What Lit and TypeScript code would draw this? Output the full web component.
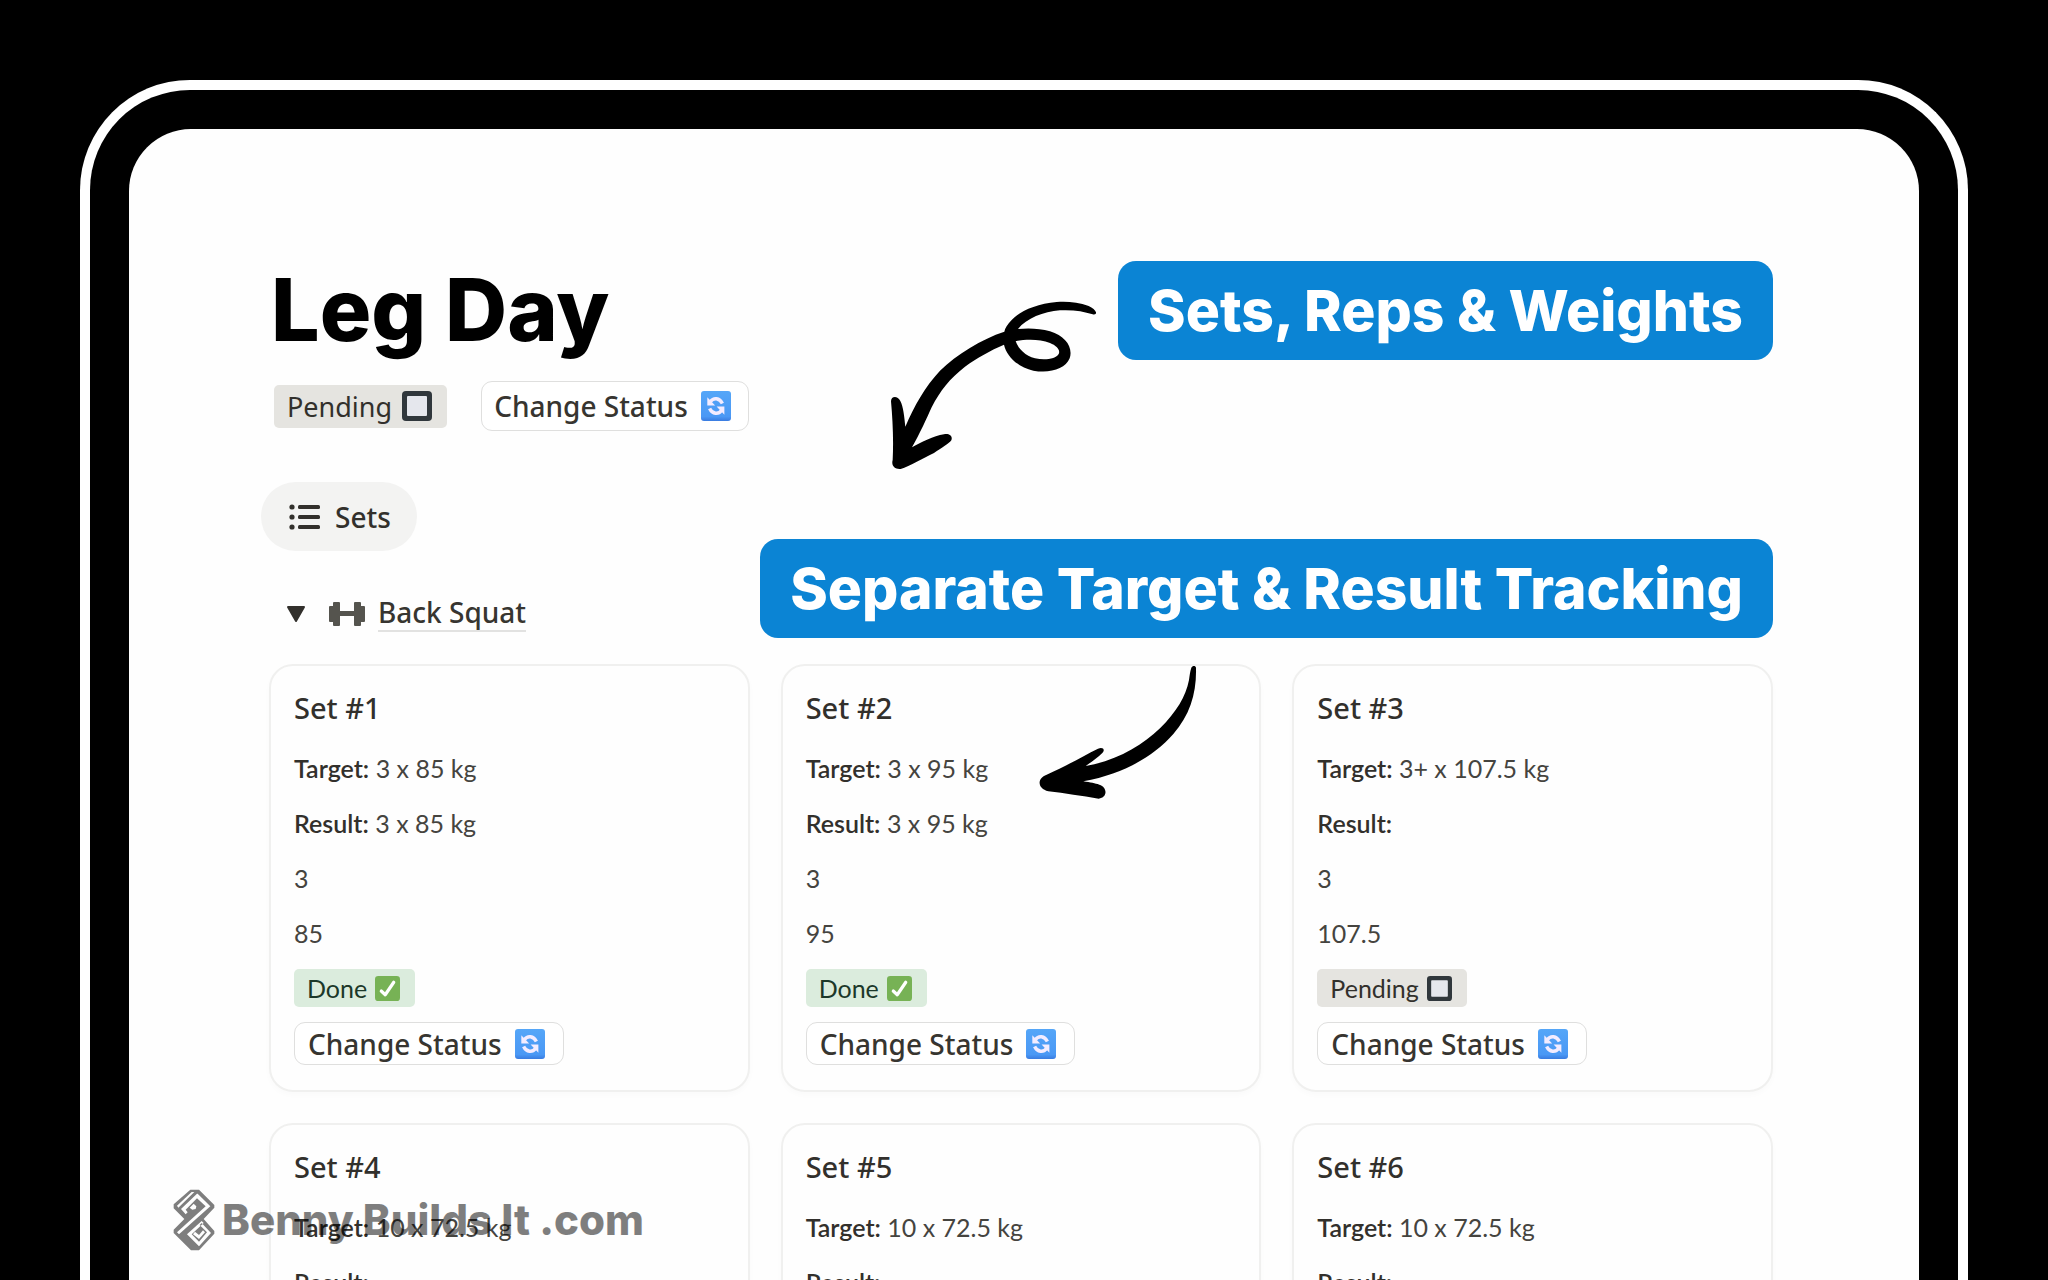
import { LitElement, html, css } from "lit";
import { customElement, property } from "lit/decorators.js";

interface WorkoutSet {
  name: string;
  target: string;
  result: string;
  reps: string;
  weight: string;
  done: boolean;
}

const SETS: WorkoutSet[] = [
  { name: "Set #1", target: "3 x 85 kg", result: "3 x 85 kg", reps: "3", weight: "85", done: true },
  { name: "Set #2", target: "3 x 95 kg", result: "3 x 95 kg", reps: "3", weight: "95", done: true },
  { name: "Set #3", target: "3+ x 107.5 kg", result: "", reps: "3", weight: "107.5", done: false },
  { name: "Set #4", target: "10 x 72.5 kg", result: "", reps: "10", weight: "72.5", done: false },
  { name: "Set #5", target: "10 x 72.5 kg", result: "", reps: "10", weight: "72.5", done: false },
  { name: "Set #6", target: "10 x 72.5 kg", result: "", reps: "10", weight: "72.5", done: false },
];

const pendingIcon = html`<svg class="icon" viewBox="0 0 30 30" aria-hidden="true">
  <rect x="0" y="0" width="30" height="30" rx="4" fill="#30373c" />
  <rect x="5" y="5" width="20" height="20" rx="1" fill="#e5e7ed" />
</svg>`;

const doneIcon = html`<svg class="icon" viewBox="0 0 30 30" aria-hidden="true">
  <rect x="0" y="0" width="30" height="30" rx="4" fill="#77b255" />
  <path d="M7.5 18 L12.3 22.5 L22.5 7.5" fill="none" stroke="#fff" stroke-width="3.8" stroke-linecap="round" stroke-linejoin="round" />
</svg>`;

const refreshIcon = html`<svg class="icon refresh" viewBox="0 0 30 30" aria-hidden="true">
  <defs>
    <linearGradient id="sky" x1="0" y1="0" x2="0" y2="1">
      <stop offset="0" stop-color="#55a6f8" />
      <stop offset="0.85" stop-color="#4a98f5" />
      <stop offset="1" stop-color="#3a7be0" />
    </linearGradient>
  </defs>
  <rect x="0" y="0" width="30" height="30" rx="3" fill="url(#sky)" />
  <g fill="none" stroke="#f3ecff" stroke-width="3.4">
    <path d="M9.5 10.5 C12.5 6.4 18.5 6.6 21.4 12.6" />
    <path d="M20.5 19.5 C17.5 23.6 11.5 23.4 8.6 17.4" />
  </g>
  <path d="M6.3 6.2 V14.4 H14.2 Z" fill="#f3ecff" />
  <path d="M23.4 23.8 V15.6 H15.6 Z" fill="#f3ecff" />
</svg>`;

@customElement("status-chip")
export class StatusChip extends LitElement {
  @property({ type: Boolean }) done = false;
  @property({ type: Boolean, reflect: true }) large = false;

  static styles = css`
    :host {
      display: inline-flex;
    }
    .chip {
      display: inline-flex;
      align-items: center;
      gap: 8px;
      height: 38px;
      padding: 0 15px 0 13px;
      border-radius: 5px;
      background: #e5e4e0;
      color: #32302c;
      font-size: 25px;
    }
    .done {
      background: #dbecdd;
      color: #1c3829;
    }
    .icon {
      width: 25px;
      height: 25px;
      flex: none;
    }
    :host([large]) .chip {
      height: 43px;
      font-family: "Noto Sans", sans-serif;
      font-size: 27px;
      gap: 10px;
    }
    :host([large]) .icon {
      width: 30px;
      height: 30px;
    }
  `;

  render() {
    return html`<span class="chip ${this.done ? "done" : ""}">
      <span>${this.done ? "Done" : "Pending"}</span>${this.done ? doneIcon : pendingIcon}
    </span>`;
  }
}

@customElement("change-status")
export class ChangeStatus extends LitElement {
  @property({ type: Boolean, reflect: true }) large = false;

  static styles = css`
    :host {
      display: inline-flex;
    }
    button {
      display: inline-flex;
      align-items: center;
      gap: 13px;
      height: 43px;
      padding: 0 18px 0 13px;
      border: 1px solid #dfdfde;
      border-radius: 11px;
      background: #fff;
      color: #373530;
      font-family: "Noto Sans", sans-serif;
      font-size: 28px;
      font-weight: 500;
      cursor: pointer;
    }
    .icon {
      width: 30px;
      height: 30px;
      flex: none;
    }
    :host([large]) button {
      height: 50px;
      padding: 0 17px 0 12px;
    }
  `;

  render() {
    return html`<button type="button"><span>Change Status</span>${refreshIcon}</button>`;
  }
}

@customElement("set-card")
export class SetCard extends LitElement {
  @property({ attribute: false }) data!: WorkoutSet;

  static styles = css`
    :host {
      display: block;
    }
    .card {
      box-sizing: border-box;
      display: flex;
      flex-direction: column;
      align-items: flex-start;
      padding: 22px 23px 25px;
      border: 2px solid #f0f0ef;
      border-radius: 24px;
      background: #fefefe;
      box-shadow: 0 3px 6px rgba(0, 0, 0, 0.02);
    }
    h3 {
      margin: 0 0 13px;
      font-family: "Noto Sans", sans-serif;
      font-size: 29px;
      line-height: 40px;
      font-weight: 500;
      color: #32302c;
    }
    p {
      margin: 0;
      font-size: 25px;
      line-height: 55px;
      color: #45443f;
      white-space: nowrap;
    }
    strong {
      font-weight: 600;
      color: #32302c;
    }
    status-chip {
      margin: 8px 0 15px;
    }
  `;

  render() {
    const d = this.data;
    return html`<article class="card">
      <h3>${d.name}</h3>
      <p><strong>Target:</strong> ${d.target}</p>
      <p><strong>Result:</strong> ${d.result}</p>
      <p>${d.reps}</p>
      <p>${d.weight}</p>
      <status-chip ?done=${d.done}></status-chip>
      <change-status></change-status>
    </article>`;
  }
}

@customElement("app-root")
export class AppRoot extends LitElement {
  static styles = css`
    :host {
      display: block;
      height: 100vh;
      overflow: hidden;
      background: #000;
      font-family: Lato, "Open Sans", sans-serif;
      color: #373530;
    }
    .device {
      margin: 80px 80px 0;
      padding: 39px 39px 0;
      border: 10px solid #fff;
      border-bottom: 0;
      border-radius: 110px 110px 0 0;
    }
    .screen {
      position: relative;
      padding: 132px 146px 0 140px;
      border-radius: 62px 62px 0 0;
      background: #fefefe;
    }
    .top {
      display: flex;
      justify-content: space-between;
      align-items: flex-start;
    }
    h1 {
      margin: 0 0 22px;
      padding-left: 2px;
      font-family: Inter, sans-serif;
      font-size: 86px;
      line-height: 98px;
      font-weight: 800;
      color: #000;
    }
    .actions {
      display: flex;
      align-items: center;
      gap: 34px;
      padding-left: 5px;
    }
    .callout {
      box-sizing: border-box;
      height: 99px;
      padding: 0 30px;
      border-radius: 18px;
      background: #0b84d4;
      color: #fff;
      font-family: Inter, sans-serif;
      font-size: 57px;
      line-height: 99px;
      font-weight: 800;
      white-space: nowrap;
    }
    .middle {
      display: flex;
      justify-content: space-between;
      align-items: flex-start;
      margin-top: 51px;
    }
    .middle .callout {
      margin-top: 57px;
    }
    .tab {
      display: flex;
      align-items: center;
      gap: 14px;
      height: 69px;
      margin-left: -8px;
      padding: 0 26px 0 28px;
      border: 0;
      border-radius: 35px;
      background: #f3f3f2;
      color: #32302c;
      font-family: "Noto Sans", sans-serif;
      font-size: 28px;
      font-weight: 500;
    }
    .tab svg {
      width: 32px;
      height: 28px;
    }
    .group {
      display: flex;
      align-items: center;
      margin-top: 44px;
      padding-left: 17px;
      font-family: "Noto Sans", sans-serif;
      font-size: 28px;
      font-weight: 500;
    }
    .toggle {
      display: flex;
      padding: 0;
      border: 0;
      background: none;
    }
    .toggle svg {
      width: 20px;
      height: 18px;
    }
    .dumbbell {
      width: 38px;
      height: 26px;
      margin: 0 12px 0 22px;
    }
    .group a {
      color: inherit;
      line-height: 35px;
      text-decoration: none;
      border-bottom: 2px solid #e2e2e1;
    }
    .cards {
      display: grid;
      grid-template-columns: repeat(3, 1fr);
      gap: 31px;
      margin-top: 26px;
    }
    .arrow-loop {
      position: absolute;
      left: 731px;
      top: 131px;
      width: 260px;
      height: 230px;
    }
    .arrow-curve {
      position: absolute;
      left: 891px;
      top: 511px;
      width: 260px;
      height: 180px;
    }
    .brand {
      position: absolute;
      left: 44px;
      top: 1060px;
      display: flex;
      align-items: center;
      gap: 7px;
      opacity: 0.5;
      color: #000;
      font-family: Inter, sans-serif;
      font-size: 42px;
      line-height: 62px;
      font-weight: 800;
      white-space: nowrap;
    }
    .brand svg {
      width: 42px;
      height: 62px;
    }
  `;

  render() {
    return html`<main class="device">
      <div class="screen">
        <header class="top">
          <div>
            <h1>Leg Day</h1>
            <div class="actions">
              <status-chip large></status-chip>
              <change-status large></change-status>
            </div>
          </div>
          <div class="callout">Sets, Reps &amp; Weights</div>
        </header>

        <div class="middle">
          <div>
            <button class="tab" type="button">
              <svg viewBox="0 0 32 28" aria-hidden="true" fill="#32302c">
                <circle cx="3" cy="4" r="2.6" />
                <circle cx="3" cy="14" r="2.6" />
                <circle cx="3" cy="24" r="2.6" />
                <rect x="9" y="2" width="22" height="4" rx="1.5" />
                <rect x="9" y="12" width="22" height="4" rx="1.5" />
                <rect x="9" y="22" width="22" height="4" rx="1.5" />
              </svg>
              <span>Sets</span>
            </button>
            <div class="group">
              <button class="toggle" type="button" aria-label="Collapse group">
                <svg viewBox="0 0 20 18" aria-hidden="true">
                  <path d="M2 2 H18 L10 16 Z" fill="#32302c" stroke="#32302c" stroke-width="2" stroke-linejoin="round" />
                </svg>
              </button>
              <svg class="dumbbell" viewBox="0 0 38 26" aria-hidden="true" fill="#55544e">
                <rect x="1" y="5" width="6" height="16" rx="1" />
                <rect x="5" y="1" width="7" height="24" rx="1" />
                <rect x="10" y="10" width="18" height="5" />
                <rect x="26" y="1" width="7" height="24" rx="1" />
                <rect x="31" y="5" width="6" height="16" rx="1" />
              </svg>
              <a href="#back-squat">Back Squat</a>
            </div>
          </div>
          <div class="callout">Separate Target &amp; Result Tracking</div>
        </div>

        <section class="cards">${SETS.map((s) => html`<set-card .data=${s}></set-card>`)}</section>

        <svg class="arrow-loop" viewBox="0 0 780 690" aria-hidden="true">
          <path
            fill="#000"
            fill-rule="evenodd"
            d="M708 157 C706 150 698 144 686 138 C655 126 620 124 590 126 C530 131 480 153 455 180 C442 194 435 205 433 215 C365 237 290 283 240 332 C195 380 163 437 136 500 C133 470 130 440 121 423 C113 406 93 407 93 424 C98 480 101 540 98 600 C93 618 105 629 122 627 C150 618 190 595 222 579 C245 564 268 550 274 541 C279 528 268 520 252 523 C220 528 185 546 156 562 C180 520 200 475 215 442 C240 392 270 355 315 320 C350 294 392 271 432 254 C440 290 475 322 520 332 C570 341 616 327 629 295 C640 262 617 229 570 214 C540 205 505 204 474 207 C500 175 550 155 600 151 C640 149 670 154 698 163 C705 165 709 162 708 157 Z M467 243 C500 238 540 237 570 249 C590 257 602 270 596 282 C588 297 555 301 525 295 C495 287 474 265 467 243 Z"
          />
        </svg>

        <svg class="arrow-curve" viewBox="0 0 780 540" aria-hidden="true">
          <path
            fill="#000"
            d="M514 83 C517 76 527 76 528 83 C530 160 510 225 460 282 C400 350 310 402 190 424 C212 427 225 430 238 434 C263 441 263 474 236 476 C185 468 135 460 85 454 C52 446 50 415 80 404 C130 383 185 350 234 326 C250 320 256 330 247 339 C232 353 214 366 197 378 C290 362 365 318 420 265 C470 215 497 170 507 120 C509 106 510 95 514 83 Z"
          />
        </svg>

        <div class="brand">
          <svg viewBox="0 0 126 186" aria-hidden="true">
            <path
              fill="#000"
              fill-rule="evenodd"
              d="M52 2 H78 L124 48 V56 L92 90 L124 126 V134 L78 184 H54 L2 132 V122 L34 90 L2 58 V46 Z
                 M56 9 L12 50 L16 56 L64 9 Z
                 M72 14 L24 60 L38 76 L44 70 L38 62 L72 28 L98 52 L12 130 L18 136 L112 52 L74 14 Z
                 M62 44 L50 56 L58 62 L68 60 L70 52 Z
                 M86 96 L42 136 L78 172 L114 132 L86 102 L80 108 L102 130 L78 158 L56 136 L92 102 Z
                 M66 128 L60 136 L78 150 L96 130 L90 124 L78 138 Z"
            />
          </svg>
          <span>Benny Builds It .com</span>
        </div>
      </div>
    </main>`;
  }
}
